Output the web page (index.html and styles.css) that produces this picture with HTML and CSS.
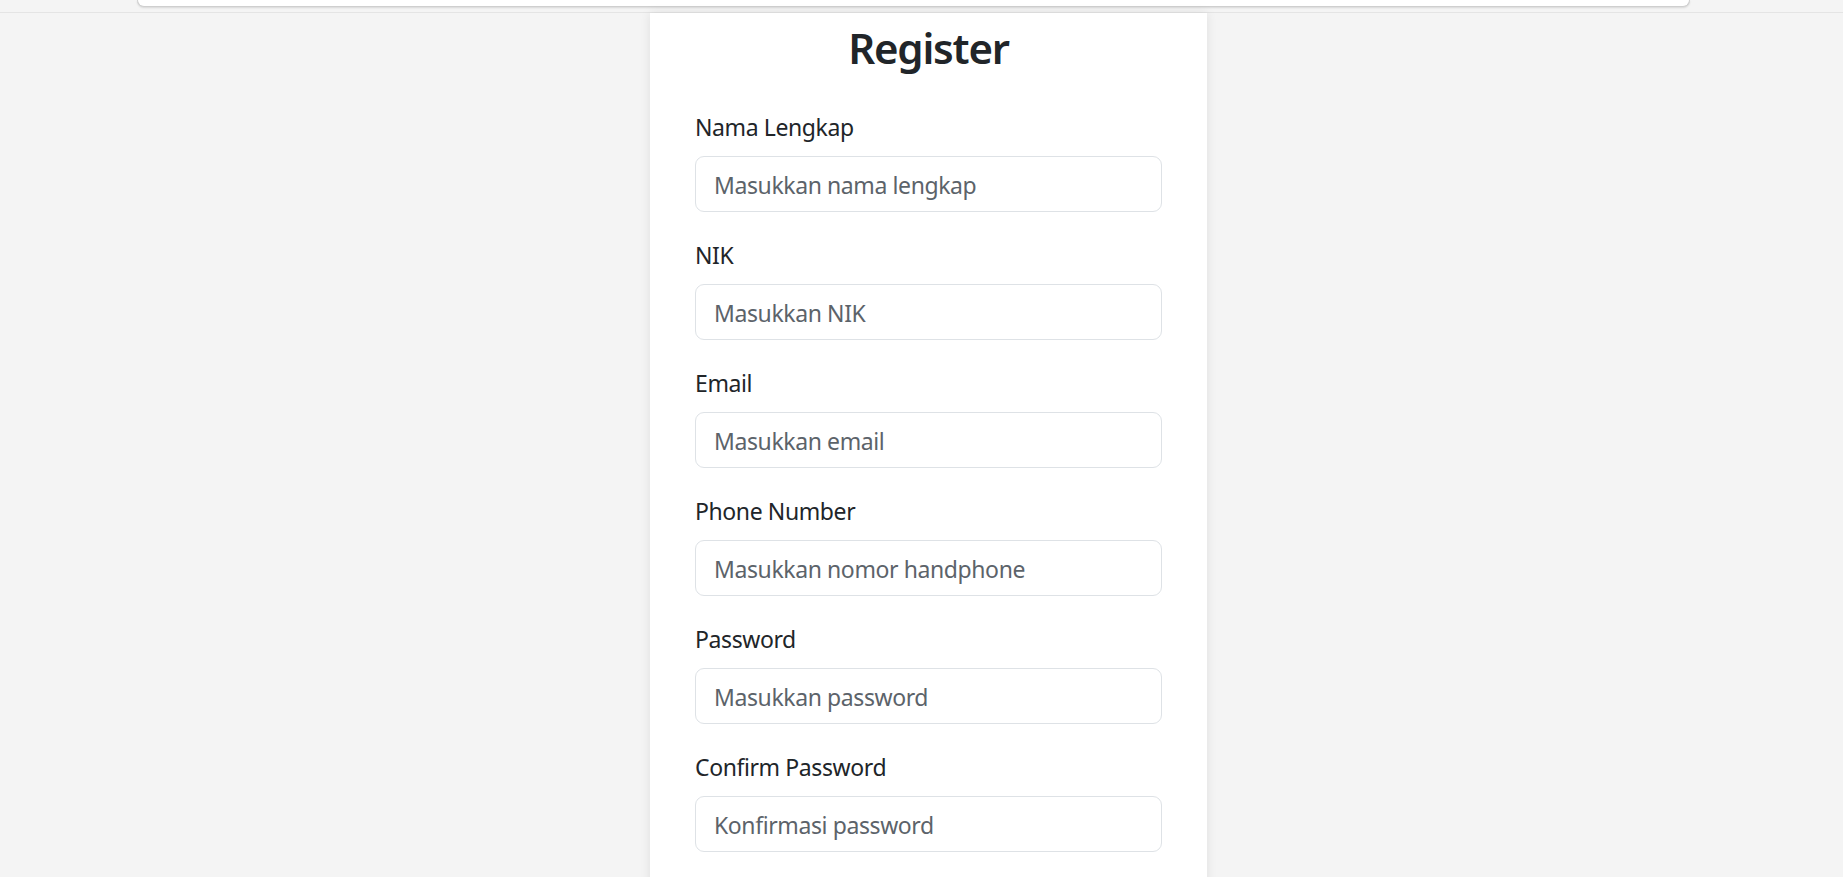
FILE: index.html
```html
<!DOCTYPE html>
<html lang="id">
<head>
<meta charset="utf-8">
<title>Register</title>
<link rel="stylesheet" href="styles.css">
</head>
<body>
<header class="topbar">
  <div class="topbar-inner"></div>
</header>
<main class="page">
  <section class="card">
    <h2 class="title">Register</h2>
    <form class="form">
      <div class="field">
        <label class="label" for="nama">Nama Lengkap</label>
        <input class="input" id="nama" type="text" placeholder="Masukkan nama lengkap">
      </div>
      <div class="field">
        <label class="label" for="nik">NIK</label>
        <input class="input" id="nik" type="text" placeholder="Masukkan NIK">
      </div>
      <div class="field">
        <label class="label" for="email">Email</label>
        <input class="input" id="email" type="email" placeholder="Masukkan email">
      </div>
      <div class="field">
        <label class="label" for="phone">Phone Number</label>
        <input class="input" id="phone" type="text" placeholder="Masukkan nomor handphone">
      </div>
      <div class="field">
        <label class="label" for="pw">Password</label>
        <input class="input" id="pw" type="password" placeholder="Masukkan password">
      </div>
      <div class="field">
        <label class="label" for="cpw">Confirm Password</label>
        <input class="input" id="cpw" type="password" placeholder="Konfirmasi password">
      </div>
    </form>
  </section>
</main>
</body>
</html>
```

FILE: styles.css
```css
* { box-sizing: border-box; }
html, body {
  margin: 0;
  padding: 0;
  background: #f4f4f4;
  font-family: "Noto Sans", "Open Sans", sans-serif;
  color: #212529;
  overflow: hidden;
}
.topbar {
  height: 13px;
  border-bottom: 1px solid #e4e4e4;
  padding-left: 137px;
}
.topbar-inner {
  width: 1553px;
  height: 7px;
  background: #fff;
  border: 1px solid #cfcfcf;
  border-top: none;
  border-radius: 0 0 18px 18px;
  box-shadow: 0 1px 2px rgba(0,0,0,0.12);
}
.page {
  display: flex;
  justify-content: center;
  padding-left: 14px;
}
.card {
  width: 557px;
  min-height: 900px;
  background: #fff;
  padding: 9px 45px 40px;
  box-shadow: 0 0 10px rgba(0,0,0,0.09);
}
.title {
  margin: 0 0 34px;
  text-align: center;
  font-size: 42px;
  line-height: 52px;
  font-weight: 600;
  letter-spacing: -1.2px;
  color: #212529;
}
.form {
  display: flex;
  flex-direction: column;
  gap: 24px;
}
.field {
  display: flex;
  flex-direction: column;
}
.label {
  font-size: 23px;
  line-height: 36px;
  letter-spacing: -0.4px;
  padding-top: 1px;
  margin-bottom: 11px;
  color: #212529;
}
.input {
  height: 56px;
  width: 100%;
  padding: 10px 18px 8px;
  font-family: inherit;
  font-size: 23px;
  line-height: 36px;
  letter-spacing: -0.4px;
  color: #212529;
  background: #fff;
  border: 1px solid #dee2e6;
  border-radius: 9px;
  outline: none;
}
.input::placeholder {
  color: #5c636a;
  opacity: 1;
}
```
